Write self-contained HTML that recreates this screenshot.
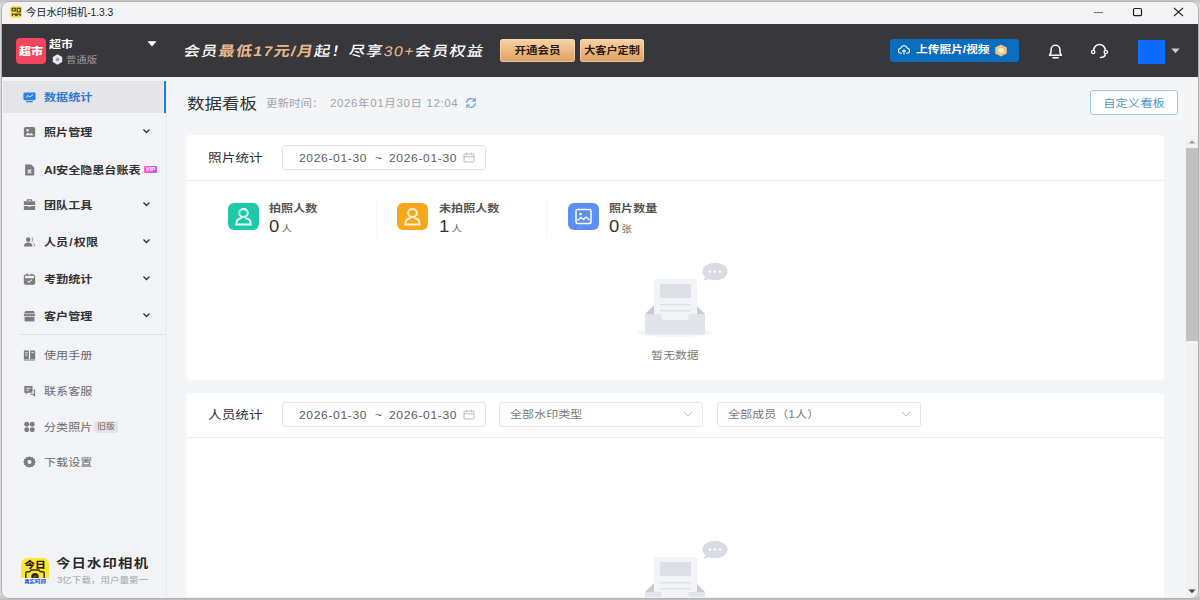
<!DOCTYPE html>
<html lang="zh-CN">
<head>
<meta charset="utf-8">
<title>今日水印相机-1.3.3</title>
<style>
*{box-sizing:border-box;margin:0;padding:0}
html,body{width:1200px;height:600px;overflow:hidden;background:#d9d9d9;font-family:"Liberation Sans","Noto Sans CJK SC",sans-serif;}
#win{position:absolute;left:0;top:0;width:1200px;height:600px;overflow:hidden}
#frame{position:absolute;left:1px;top:1px;width:1198px;height:597.5px;border-radius:8px;background:#f3f3f3;overflow:hidden}
#topband{position:absolute;left:0;top:0;width:1200px;height:6px;background:linear-gradient(#c4c4c4 0,#c8c8c8 2px,#d9d9d9 6px)}
#botband{position:absolute;left:0;top:594px;width:1200px;height:6px;background:linear-gradient(#d9d9d9 0,#c2c2c2 4px,#bcbcbc 6px)}
#edge{position:absolute;left:1px;top:1px;width:1198px;height:597.5px;border-radius:8px;border:1px solid #b2b2b2;pointer-events:none}
.abs{position:absolute}
.x{position:absolute;transform:scaleX(1.15);transform-origin:0 50%;white-space:nowrap}
.xc{position:absolute;transform:scaleX(1.15);transform-origin:50% 50%;white-space:nowrap;text-align:center}
#titlebar{position:absolute;left:0;top:0;width:1200px;height:24px;background:#f3f3f3}
#hdr{position:absolute;left:0;top:24px;width:1200px;height:53px;background:#38373b}
#side{position:absolute;left:0;top:77px;width:167px;height:523px;background:#f2f3f7;border-right:1px solid #e8e9ec}
#main{position:absolute;left:167px;top:77px;width:1033px;height:523px;background:#f4f5f7}
.mi{position:absolute;left:3px;width:161px;height:33px}
.mi .t{position:absolute;left:41px;top:9px;font-size:10.5px;line-height:16px;font-weight:700;color:#333;transform:scaleX(1.15);transform-origin:0 50%;white-space:nowrap}
.mi.l .t{font-weight:400;color:#6a6a6c}
.mi svg.ic{position:absolute;left:19.5px;top:10.5px;width:13px;height:12px}
.mi svg.ch{position:absolute;left:139px;top:13px;width:9px;height:7px}
.card{position:absolute;left:187px;width:977px;background:#fff;border-radius:3px}
.ct{position:absolute;left:21px;top:14px;font-size:11.9px;color:#303133;line-height:18px;transform:scaleX(1.15);transform-origin:0 50%;white-space:nowrap}
.dp{position:absolute;height:24.5px;border:1px solid #e3e5e9;border-radius:3px;background:#fff;font-size:10.5px;color:#5a5c60;line-height:22.5px}
.dp .x{top:0}
.st{position:absolute;top:68px;width:31px;height:27px;border-radius:6px}
.sl{position:absolute;top:66px;font-size:10.5px;font-weight:700;color:#555;line-height:14px;transform:scaleX(1.15);transform-origin:0 50%;white-space:nowrap}
.sv{position:absolute;top:81px;font-size:16px;color:#333;line-height:22px;transform:scaleX(1.15);transform-origin:0 50%;white-space:nowrap}
.sv small{font-size:9px;color:#666;margin-left:2px}
</style>
</head>
<body>
<div id="win">
<div id="topband"></div><div id="botband"></div><div id="frame"></div>
<div id="clip" class="abs" style="left:2px;top:2px;width:1196px;height:595px;border-radius:7px 7px 6px 6px;overflow:hidden">
<div class="abs" style="left:-2px;top:-2px;width:1200px;height:600px">
  <div id="titlebar">
    <svg class="abs" style="left:9.500px;top:6px" width="12.500" height="12" viewBox="0 0 13 14" preserveAspectRatio="none"><rect x="0.300" y="0.300" width="12.400" height="13.400" rx="3" fill="#f7e247"/><rect x="2.300" y="2.600" width="3.200" height="3.200" fill="none" stroke="#4a4416" stroke-width="1.300"/><rect x="7.500" y="2.600" width="3.200" height="4.200" fill="none" stroke="#4a4416" stroke-width="1.300"/><path d="M2.500 11.800V9.500h8v2.300" fill="none" stroke="#4a4416" stroke-width="1.300"/><rect x="5.200" y="10" width="2.600" height="1.800" fill="#4a4416"/></svg>
    <div class="x" style="left:25.500px;top:5.500px;font-size:10px;color:#1b1b1b;line-height:14px;transform:scaleX(1.02)">今日水印相机-1.3.3</div>
    <div class="abs" style="left:1094px;top:11.500px;width:9px;height:1.200px;background:#707070"></div>
    <svg class="abs" style="left:1132px;top:7px" width="11" height="10" viewBox="0 0 11 10"><rect x="1.500" y="1.500" width="8" height="7.200" rx="1.300" fill="none" stroke="#1f1f1f" stroke-width="1.200"/></svg>
    <svg class="abs" style="left:1173px;top:7px" width="11" height="10" viewBox="0 0 11 10"><path d="M1 1l9 8M10 1l-9 8" stroke="#2a2a2a" stroke-width="1.100" fill="none"/></svg>
  </div>
  <div id="hdr">
    <div class="abs" style="left:16px;top:14px;width:30px;height:26px;border-radius:4px;background:#f5455c"></div>
    <div class="xc" style="left:16px;top:14px;width:30px;font-size:10.500px;font-weight:900;color:#fff;line-height:26px">超市</div>
    <div class="x" style="left:49px;top:13px;font-size:10.500px;font-weight:700;color:#fff;line-height:14px">超市</div>
    <svg class="abs" style="left:52px;top:30px" width="11" height="11" viewBox="0 0 11 11"><path d="M5.500 0.300l4.700 2.600v5.200l-4.700 2.600-4.700-2.600V2.900z" fill="#e9e9ea"/><circle cx="5.500" cy="5.500" r="1.700" fill="#9a9a9d"/></svg>
    <div class="x" style="left:66px;top:30px;font-size:9px;color:#9c9ca0;line-height:12px">普通版</div>
    <svg class="abs" style="left:147px;top:17px" width="10" height="6" viewBox="0 0 10 6"><path d="M0.500 0.300h9L5 5.600z" fill="#fff"/></svg>
    <div class="x" style="left:184px;top:16px;font-size:14px;color:#fff;line-height:22px;letter-spacing:1.100px;transform:scaleX(1.15) skewX(-9deg);font-weight:500">会员<b style="color:#e9b98a">最低17元/月</b>起！尽享<span style="color:#e9b98a">30+</span>会员权益</div>
    <div class="abs" style="left:500px;top:15px;width:75px;height:23px;border-radius:3px;background:linear-gradient(#f7d3a6,#de9e62);box-shadow:inset 0 0 0 1px rgba(255,225,185,.5)"></div>
    <div class="xc" style="left:500px;top:15px;width:75px;font-size:10px;font-weight:700;color:#2a1c0c;line-height:23px">开通会员</div>
    <div class="abs" style="left:580px;top:15px;width:64px;height:23px;border-radius:3px;background:linear-gradient(#f7d3a6,#de9e62);box-shadow:inset 0 0 0 1px rgba(255,225,185,.5)"></div>
    <div class="xc" style="left:580px;top:15px;width:64px;font-size:9.700px;font-weight:700;color:#2a1c0c;line-height:23px">大客户定制</div>
    <div class="abs" style="left:890px;top:15px;width:129px;height:23px;border-radius:3px;background:#0b6dbd"></div>
    <svg class="abs" style="left:898px;top:21px" width="12" height="10" viewBox="0 0 12 10"><path d="M3.400 8.200H3a2.400 2.400 0 0 1-.3-4.800A3.400 3.400 0 0 1 9.300 3.400 2.400 2.400 0 0 1 9 8.200H8.600" fill="none" stroke="#fff" stroke-width="1.100" stroke-linecap="round"/><path d="M6 9V5M4.500 6.300L6 4.800l1.500 1.500" fill="none" stroke="#fff" stroke-width="1.100" stroke-linecap="round" stroke-linejoin="round"/></svg>
    <div class="x" style="left:916px;top:18px;font-size:10.200px;font-weight:700;color:#fff;line-height:16px">上传照片/视频</div>
    <svg class="abs" style="left:994px;top:20px" width="14" height="13" viewBox="0 0 14 13" preserveAspectRatio="none"><path d="M7 0.500l5.800 3v6L7 12.500l-5.800-3v-6z" fill="#f3c27c"/><path d="M7 3.800l2.800 1.400v2.600L7 9.200 4.200 7.800V5.200z" fill="#fff3dc"/></svg>
    <svg class="abs" style="left:1047px;top:18px" width="17" height="18" viewBox="0 0 17 18"><path d="M2.500 13.200h12c-1.200-1.200-1.600-2.200-1.600-4.200V7.500a4.400 4.200 0 0 0-8.800 0V9c0 2-.4 3-1.600 4.200z" fill="none" stroke="#fff" stroke-width="1.500" stroke-linejoin="round"/><path d="M6 15.800h5" stroke="#fff" stroke-width="1.500" stroke-linecap="round"/></svg>
    <svg class="abs" style="left:1090px;top:19px" width="19" height="17" viewBox="0 0 19 17"><path d="M3.800 8V7a5.700 5.500 0 0 1 11.400 0v1" fill="none" stroke="#fff" stroke-width="1.500"/><ellipse cx="3.200" cy="9" rx="1.700" ry="1.600" fill="none" stroke="#fff" stroke-width="1.300"/><ellipse cx="15.800" cy="9" rx="1.700" ry="1.600" fill="none" stroke="#fff" stroke-width="1.300"/><path d="M15.200 10.600c0 2.600-2.200 4-4.700 4" fill="none" stroke="#fff" stroke-width="1.500" stroke-linecap="round"/></svg>
    <div class="abs" style="left:1138px;top:16px;width:27px;height:23.500px;background:#0a6cff"></div>
    <svg class="abs" style="left:1171px;top:24px" width="9" height="6" viewBox="0 0 9 6"><path d="M0.300 0.500h8.400L4.500 5.200z" fill="#c9c9cb"/></svg>
  </div>
  <div id="side">
    <div class="mi" style="top:3px;"><div class="abs" style="left:0;top:1px;width:160px;height:32px;background:#e4e4e9"></div><svg class="ic" viewBox="0 0 15 13" preserveAspectRatio="none"><rect x="0.500" y="1.500" width="14" height="8.500" rx="1.500" fill="#2583e6"/><path d="M3.500 7l2.200-2 2.200 1.500L11.500 4" stroke="#fff" stroke-width="1" fill="none"/><rect x="3.500" y="10.800" width="8" height="1.400" rx=".7" fill="#2583e6"/></svg><div class="t" style="color:#2a7bd8">数据统计</div></div>
    <div class="abs" style="left:164px;top:4px;width:2.200px;height:32px;background:#1b7fd6"></div>
    <div class="mi" style="top:38px"><svg class="ic" viewBox="0 0 15 13" preserveAspectRatio="none"><rect x="1" y="1" width="13" height="11" rx="2" fill="#7c7c7e"/><circle cx="5.200" cy="4.500" r="1.300" fill="#f2f3f7"/><path d="M2.700 10l3.200-3 2.200 2 1.600-1.500L12.300 10z" fill="#f2f3f7"/></svg><div class="t">照片管理</div><svg class="ch" viewBox="0 0 9 7"><path d="M1.500 1.500l3 3 3-3" stroke="#333" stroke-width="1.400" fill="none"/></svg></div>
    <div class="mi" style="top:76px"><svg class="ic" viewBox="0 0 15 13" preserveAspectRatio="none"><path d="M2.500 0.500h7l3.500 3.200V12.500H2.500z" fill="#7c7c7e"/><path d="M5.500 6l4 4M9.500 6l-4 4" stroke="#f2f3f7" stroke-width="1.300"/></svg><div class="t">AI安全隐患台账表</div><div class="abs" style="left:141px;top:13px;width:13px;height:7px;border-radius:1px;background:linear-gradient(90deg,#ff5fd0,#c84cf0)"></div><div class="xc" style="left:141px;top:13px;width:13px;color:#fff;font-size:5px;line-height:7px;font-weight:700;font-style:italic">VIP</div></div>
    <div class="mi" style="top:111px"><svg class="ic" viewBox="0 0 15 13" preserveAspectRatio="none"><path d="M5 2.500V1h5v1.500" fill="none" stroke="#7c7c7e" stroke-width="1.300"/><path d="M1 2.500h13v4H1z" fill="#7c7c7e"/><path d="M1 7.500h5v1h3v-1h5V12H1z" fill="#7c7c7e"/></svg><div class="t">团队工具</div><svg class="ch" viewBox="0 0 9 7"><path d="M1.500 1.500l3 3 3-3" stroke="#333" stroke-width="1.400" fill="none"/></svg></div>
    <div class="mi" style="top:148px"><svg class="ic" viewBox="0 0 15 13" preserveAspectRatio="none"><circle cx="6" cy="4" r="2.600" fill="#7c7c7e"/><path d="M1 11.500c0-3 2.200-4.500 5-4.500s5 1.500 5 4.500z" fill="#7c7c7e"/><path d="M10 2a2.300 2.300 0 0 1 0 4.300M11.700 7.700c1.400.7 2.100 2 2.100 3.600" stroke="#9a9a9c" stroke-width="1.100" fill="none"/></svg><div class="t">人员<span style="margin:0 1px">/</span>权限</div><svg class="ch" viewBox="0 0 9 7"><path d="M1.500 1.500l3 3 3-3" stroke="#333" stroke-width="1.400" fill="none"/></svg></div>
    <div class="mi" style="top:185px"><svg class="ic" viewBox="0 0 15 13" preserveAspectRatio="none"><rect x="1.600" y="2.200" width="11.800" height="9.800" rx="1.500" fill="none" stroke="#7c7c7e" stroke-width="1.300"/><path d="M1.600 5.600h11.800v5a1.500 1.500 0 0 1-1.500 1.500H3.100a1.500 1.500 0 0 1-1.500-1.500z" fill="#7c7c7e"/><path d="M4.800 0.600v2.500M10.200 0.600v2.500" stroke="#7c7c7e" stroke-width="1.300"/><path d="M5.200 8.600l1.800 1.500 3.200-3" stroke="#f2f3f7" stroke-width="1.200" fill="none"/></svg><div class="t">考勤统计</div><svg class="ch" viewBox="0 0 9 7"><path d="M1.500 1.500l3 3 3-3" stroke="#333" stroke-width="1.400" fill="none"/></svg></div>
    <div class="mi" style="top:222px"><svg class="ic" viewBox="0 0 15 13" preserveAspectRatio="none"><path d="M2.700 1h9.600L14 3.700H1z" fill="#7c7c7e"/><rect x="1" y="4.500" width="13" height="2.200" fill="#7c7c7e"/><rect x="1.800" y="7.500" width="11.400" height="4.800" fill="#7c7c7e"/></svg><div class="t">客户管理</div><svg class="ch" viewBox="0 0 9 7"><path d="M1.500 1.500l3 3 3-3" stroke="#333" stroke-width="1.400" fill="none"/></svg></div>
    <div class="abs" style="left:20px;top:257px;width:146px;height:1px;background:#e0e1e5"></div>
    <div class="mi l" style="top:261px"><svg class="ic" viewBox="0 0 15 13" preserveAspectRatio="none"><path d="M1 1.500h5.800v9.500H1zM8.200 1.500H14v9.500H8.200z" fill="#7c7c7e"/><path d="M2.400 4h3M2.400 6.500h3M9.600 4h3" stroke="#f2f3f7" stroke-width="1"/><path d="M1 12h13" stroke="#7c7c7e" stroke-width="1"/></svg><div class="t">使用手册</div></div>
    <div class="mi l" style="top:297px"><svg class="ic" viewBox="0 0 15 13" preserveAspectRatio="none"><path d="M1.500 1h9.500v7.500H5.300l-2.100 2V8.500H1.500z" fill="#7c7c7e"/><path d="M3.700 3.500h5.300M3.700 5.800h3.200" stroke="#f2f3f7" stroke-width="1"/><path d="M8.500 10h3.200l1.600 1.500v-6H12.200" fill="none" stroke="#7c7c7e" stroke-width="1.300"/></svg><div class="t">联系客服</div></div>
    <div class="mi l" style="top:333px"><svg class="ic" viewBox="0 0 15 13" preserveAspectRatio="none"><ellipse cx="4.300" cy="3.500" rx="2.900" ry="2.600" fill="#7c7c7e"/><ellipse cx="10.700" cy="3.500" rx="2.900" ry="2.600" fill="#7c7c7e"/><ellipse cx="4.300" cy="9.500" rx="2.900" ry="2.600" fill="#7c7c7e"/><ellipse cx="10.700" cy="9.500" rx="2.900" ry="2.600" fill="#7c7c7e"/></svg><div class="t">分类照片</div><div class="abs" style="left:91px;top:11px;width:24px;height:12px;border-radius:2px;background:#e2e3e6"></div><div class="xc" style="left:91px;top:11px;width:24px;color:#666;font-size:7.500px;line-height:12px">旧版</div></div>
    <div class="mi l" style="top:368px"><svg class="ic" viewBox="0 0 14 14" preserveAspectRatio="none"><path d="M7 0.200l1.500 1.200 1.900-.3.700 1.800 1.800.7-.3 1.900L13.800 7 12.600 8.500l.3 1.900-1.800.7-.7 1.800-1.900-.3L7 13.800 5.500 12.600l-1.900.3-.7-1.800-1.800-.7.300-1.900L0.200 7 1.400 5.500l-.3-1.900 1.800-.7.700-1.800 1.900.3z" fill="#7c7c7e"/><circle cx="7" cy="7" r="2.200" fill="#f2f3f7"/></svg><div class="t">下载设置</div></div>
    <svg class="abs" style="left:21px;top:481px" width="28" height="26" viewBox="0 0 28 26"><defs><clipPath id="lg"><rect width="28" height="26" rx="6"/></clipPath></defs><g clip-path="url(#lg)"><rect width="28" height="26" fill="#ffe631"/><text transform="translate(14,10.300) scale(1.15,1)" font-size="9.400" font-weight="900" text-anchor="middle" fill="#2a2408" font-family="Liberation Sans,Noto Sans CJK SC,sans-serif">今日</text><path d="M4.800 21v-6a1.200 1.200 0 0 1 1.200-1.200h2.800l1.300-1.700h7.800l1.300 1.700H22a1.200 1.200 0 0 1 1.200 1.200v6" fill="none" stroke="#3a3208" stroke-width="1.500"/><circle cx="14" cy="18.800" r="3.700" fill="#2a2a1a"/><circle cx="14" cy="18.800" r="1.600" fill="#5a5a4a"/><rect y="20" width="28" height="6" fill="#f6f8ff"/><text transform="translate(14,24.600) scale(1.15,1)" font-size="4.700" font-weight="900" text-anchor="middle" fill="#2a55d8" font-family="Liberation Sans,Noto Sans CJK SC,sans-serif">真实时间</text></g></svg>
    <div class="x" style="left:56px;top:478px;font-size:12.500px;font-weight:700;color:#2a2a2a;line-height:18px;letter-spacing:1px">今日水印相机</div>
    <div class="x" style="left:57px;top:497px;font-size:8.300px;color:#a2a3a7;line-height:12px">3亿下载，用户量第一</div>
  </div>
  <div id="main"></div>
  <div class="x" style="left:187px;top:92px;font-size:15.200px;color:#303133;line-height:24px">数据看板</div>
  <div class="x" style="left:266px;top:96px;font-size:10px;color:#a0a3a8;line-height:16px">更新时间：</div><div class="x" style="left:330px;top:96px;font-size:10px;color:#a0a3a8;line-height:16px;letter-spacing:0.550px">2026年01月30日 12:04</div>
  <svg class="abs" style="left:464.500px;top:96.500px" width="12" height="12" viewBox="0 0 13 13"><path d="M1.800 6A4.800 4.800 0 0 1 10.700 4M11.200 7A4.800 4.800 0 0 1 2.300 9" fill="none" stroke="#6b9be6" stroke-width="1.250" stroke-linecap="round"/><path d="M11 1.500v2.700H8.300M2 11.500V8.800h2.700" fill="none" stroke="#6b9be6" stroke-width="1.250" stroke-linecap="round" stroke-linejoin="round"/></svg>
  <div class="abs" style="left:1090px;top:90px;width:88px;height:25px;border:1px solid #9ccadf;border-radius:3px;background:#fff"></div>
  <div class="xc" style="left:1090px;top:91px;width:88px;color:#4a9bc8;font-size:10.700px;line-height:25px">自定义看板</div>

  <div class="card" style="top:135px;height:245px">
    <div class="ct">照片统计</div>
    <div class="dp" style="left:95px;top:10px;width:204px"><span class="x" style="left:16px;top:1px;letter-spacing:0.550px">2026-01-30</span><span class="x" style="left:92px;top:1px">~</span><span class="x" style="left:106px;top:1px;letter-spacing:0.550px">2026-01-30</span><svg class="abs" style="left:180px;top:6px" width="12" height="11" viewBox="0 0 12 11"><rect x="1" y="2" width="10" height="8" rx="1" fill="none" stroke="#b8bbc0" stroke-width="1"/><path d="M1 4.800h10M3.500 0.800v2.200M8.500 0.800v2.200" stroke="#b8bbc0" stroke-width="1"/></svg></div>
    <div class="abs" style="left:0;top:45px;width:977px;height:1px;background:#ebedf0"></div>

    <div class="st" style="left:41px;background:#1dc9a6"></div>
    <svg class="abs" style="left:41px;top:68px" width="31" height="27" viewBox="0 0 31 27"><ellipse cx="15.500" cy="10" rx="4.300" ry="4" fill="none" stroke="#e9fff9" stroke-width="1.900"/><path d="M8.500 21.500v-1.500c0-2.500 2-4.200 4.500-4.700M22.500 21.500v-1.500c0-2.500-2-4.200-4.500-4.700M8 21.500h15" fill="none" stroke="#e9fff9" stroke-width="1.900" stroke-linecap="round"/></svg>
    <div class="sl" style="left:82px">拍照人数</div>
    <div class="sv" style="left:82px">0<small>人</small></div>
    <div class="abs" style="left:189px;top:64px;width:1px;height:38px;background:#f5f6f7"></div>

    <div class="st" style="left:210px;background:#f7a71a"></div>
    <svg class="abs" style="left:210px;top:68px" width="31" height="27" viewBox="0 0 31 27"><ellipse cx="15.500" cy="10" rx="4.300" ry="4" fill="none" stroke="#fff4d8" stroke-width="1.900"/><path d="M8.500 21.500v-1.500c0-2.500 2-4.200 4.500-4.700M22.500 21.500v-1.500c0-2.500-2-4.200-4.500-4.700M8 21.500h15" fill="none" stroke="#fff4d8" stroke-width="1.900" stroke-linecap="round"/></svg>
    <div class="sl" style="left:252px">未拍照人数</div>
    <div class="sv" style="left:252px">1<small>人</small></div>
    <div class="abs" style="left:359px;top:64px;width:1px;height:38px;background:#f5f6f7"></div>

    <div class="st" style="left:381px;background:#5b8ff0"></div>
    <svg class="abs" style="left:381px;top:68px" width="31" height="27" viewBox="0 0 31 27"><rect x="8" y="6.500" width="15" height="14" rx="1.500" fill="none" stroke="#fff" stroke-width="1.500"/><circle cx="12.500" cy="11" r="1.300" fill="#fff"/><path d="M9.500 17.500l3.500-3 2.500 2 2.500-2.500 3.500 3" fill="none" stroke="#fff" stroke-width="1.400" stroke-linejoin="round"/></svg>
    <div class="sl" style="left:422px">照片数量</div>
    <div class="sv" style="left:422px">0<small>张</small></div>

    <svg class="abs" style="left:428px;top:124px" width="120" height="82" viewBox="0 0 120 82"><ellipse cx="60" cy="73.500" rx="38" ry="4.500" fill="#f5f6f9"/><ellipse cx="100" cy="12.500" rx="12.600" ry="8.700" fill="#d9dce4"/><path d="M91 17l-3 5 7-2.500z" fill="#d9dce4"/><circle cx="95" cy="12.500" r="1.300" fill="#fff"/><circle cx="100" cy="12.500" r="1.300" fill="#fff"/><circle cx="105" cy="12.500" r="1.300" fill="#fff"/><path d="M30 55l9-9v9zM90 55l-9-9v9z" fill="#c5ccd6"/><rect x="39" y="20" width="43" height="44" rx="1.500" fill="#f2f3f7"/><rect x="45" y="25" width="31" height="14" fill="#dcdfe6"/><rect x="45" y="45" width="31" height="1.400" fill="#dcdfe6"/><rect x="45" y="51" width="31" height="1.400" fill="#dcdfe6"/><path d="M30 55h16.500v3.500a2.500 2.500 0 0 0 2.500 2.500h22a2.500 2.500 0 0 0 2.500-2.500V55H90v19a1.500 1.500 0 0 1-1.500 1.500h-57A1.500 1.500 0 0 1 30 74z" fill="#e1e4ea"/></svg>
    <div class="xc" style="left:428px;top:212.500px;width:120px;color:#7a7a7c;font-size:10.300px;line-height:16px">暂无数据</div>
  </div>

  <div class="card" style="top:392.500px;height:230px">
    <div class="ct" style="top:13.500px">人员统计</div>
    <div class="dp" style="left:95px;top:9.500px;width:204px"><span class="x" style="left:16px;top:1px;letter-spacing:0.550px">2026-01-30</span><span class="x" style="left:92px;top:1px">~</span><span class="x" style="left:106px;top:1px;letter-spacing:0.550px">2026-01-30</span><svg class="abs" style="left:180px;top:6px" width="12" height="11" viewBox="0 0 12 11"><rect x="1" y="2" width="10" height="8" rx="1" fill="none" stroke="#b8bbc0" stroke-width="1"/><path d="M1 4.800h10M3.500 0.800v2.200M8.500 0.800v2.200" stroke="#b8bbc0" stroke-width="1"/></svg></div>
    <div class="dp" style="left:312px;top:9.500px;width:204px"><span class="x" style="left:10px;color:#76787c">全部水印类型</span><svg class="abs" style="left:183px;top:8px" width="10" height="7" viewBox="0 0 10 7"><path d="M1 1l4 4 4-4" fill="none" stroke="#b8bbc0" stroke-width="1"/></svg></div>
    <div class="dp" style="left:530px;top:9.500px;width:204px"><span class="x" style="left:10px;color:#76787c">全部成员（1人）</span><svg class="abs" style="left:183px;top:8px" width="10" height="7" viewBox="0 0 10 7"><path d="M1 1l4 4 4-4" fill="none" stroke="#b8bbc0" stroke-width="1"/></svg></div>
    <div class="abs" style="left:0;top:44px;width:977px;height:1px;background:#ebedf0"></div>
    <svg class="abs" style="left:428px;top:144.500px" width="120" height="82" viewBox="0 0 120 82"><ellipse cx="60" cy="73.500" rx="38" ry="4.500" fill="#f5f6f9"/><ellipse cx="100" cy="12.500" rx="12.600" ry="8.700" fill="#d9dce4"/><path d="M91 17l-3 5 7-2.500z" fill="#d9dce4"/><circle cx="95" cy="12.500" r="1.300" fill="#fff"/><circle cx="100" cy="12.500" r="1.300" fill="#fff"/><circle cx="105" cy="12.500" r="1.300" fill="#fff"/><path d="M30 55l9-9v9zM90 55l-9-9v9z" fill="#c5ccd6"/><rect x="39" y="20" width="43" height="44" rx="1.500" fill="#f2f3f7"/><rect x="45" y="25" width="31" height="14" fill="#dcdfe6"/><rect x="45" y="45" width="31" height="1.400" fill="#dcdfe6"/><rect x="45" y="51" width="31" height="1.400" fill="#dcdfe6"/><path d="M30 55h16.500v3.500a2.500 2.500 0 0 0 2.500 2.500h22a2.500 2.500 0 0 0 2.500-2.500V55H90v19a1.500 1.500 0 0 1-1.500 1.500h-57A1.500 1.500 0 0 1 30 74z" fill="#e1e4ea"/></svg>
  </div>

  <div class="abs" style="left:1185px;top:135px;width:13px;height:465px;background:#f1f1f1"></div>
  <div class="abs" style="left:1186px;top:148px;width:12px;height:193px;background:#c1c1c1"></div>
  <svg class="abs" style="left:1188px;top:139px" width="8" height="5" viewBox="0 0 8 5"><path d="M0.800 4.500L4 1.200l3.200 3.300z" fill="#9a9a9a"/></svg>
  <svg class="abs" style="left:1188px;top:589px" width="8" height="5" viewBox="0 0 8 5"><path d="M0.500 0.500L4 4.200 7.500 0.500z" fill="#444"/></svg>
</div>
</div>
<div id="edge"></div>
</div>
</body>
</html>
